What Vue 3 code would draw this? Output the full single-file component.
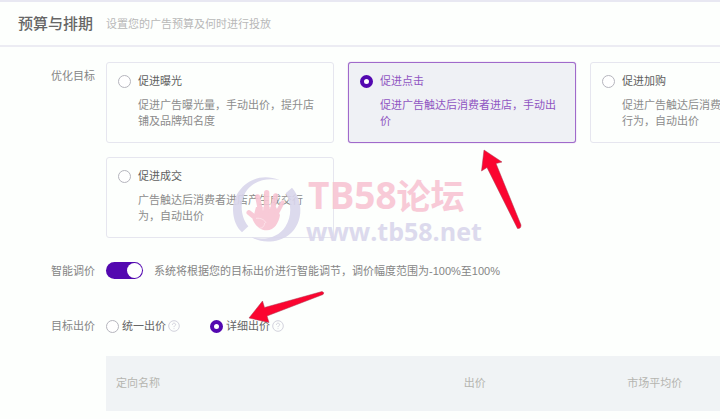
<script setup>
import { ref } from 'vue'

const goal = ref('click')
const bid = ref('detail')
const smart = ref(true)

const goals = [
  { id: 'exposure', title: '促进曝光', text: '促进广告曝光量，手动出价，提升店铺及品牌知名度' },
  { id: 'click', title: '促进点击', text: '促进广告触达后消费者进店，手动出价' },
  { id: 'cart', title: '促进加购', text: '促进广告触达后消费者进店产生加购行为，自动出价' },
  { id: 'deal', title: '促进成交', text: '广告触达后消费者进店产生成交行为，自动出价' }
]
const bids = [
  { id: 'unified', label: '统一出价' },
  { id: 'detail', label: '详细出价' }
]
</script>

<template>
  <main class="page">
    <header class="head">
      <h1>预算与排期</h1>
      <p>设置您的广告预算及何时进行投放</p>
    </header>

    <form class="form">
      <div class="row goals-row">
        <span id="goal-label" class="label">优化目标</span>
        <div class="goals" role="radiogroup" aria-labelledby="goal-label">
          <label v-for="g in goals" :key="g.id" class="card" :class="{ active: goal === g.id }">
            <input v-model="goal" class="radio" type="radio" name="goal" :value="g.id" />
            <span class="card-body">
              <span class="card-title">{{ g.title }}</span>
              <span class="card-text">{{ g.text }}</span>
            </span>
          </label>
        </div>
      </div>

      <div class="row smart-row">
        <label class="label" for="smart">智能调价</label>
        <input id="smart" v-model="smart" class="switch" type="checkbox" role="switch" />
        <span class="hint">系统将根据您的目标出价进行智能调节，调价幅度范围为-100%至100%</span>
      </div>

      <div class="row bid-row">
        <span id="bid-label" class="label">目标出价</span>
        <div class="bids" role="radiogroup" aria-labelledby="bid-label">
          <label v-for="b in bids" :key="b.id" class="bid">
            <input v-model="bid" class="radio" type="radio" name="bid" :value="b.id" />
            <span class="bid-text">{{ b.label }}</span>
            <svg class="help" viewBox="0 0 12 12" aria-hidden="true">
              <circle cx="6" cy="6" r="5.3" />
              <path d="M4.4 4.8C4.4 2.6 7.7 2.7 7.6 4.7C7.5 5.8 6 5.8 6 7.1M6 8.3V9.1" />
            </svg>
          </label>
        </div>
      </div>

      <div class="table-wrap">
        <table>
          <thead>
            <tr>
              <th class="col-name" scope="col">定向名称</th>
              <th class="col-bid" scope="col">出价</th>
              <th scope="col">市场平均价</th>
            </tr>
          </thead>
        </table>
      </div>
    </form>

    <div class="mark">
      <svg class="emblem" viewBox="36 33 210 204" aria-hidden="true">
        <g fill="#d9d6ec">
          <path d="M178 45C105 15 39 70 39 135C40 165 50 187 66 202L85 184C56 149 58 90 94 62C118 44 146 40 178 45Z" />
          <path d="M197 85L216 68C254 112 247 178 207 209C174 234 126 236 95 217C137 228 177 215 196 185C215 154 216 117 197 85Z" />
        </g>
        <g fill="#f8c5d3" stroke="#f8c5d3" stroke-linecap="round">
          <path d="M108 126L168 126L180 150C176 174 163 196 140 196C120 196 106 182 98 164Z" stroke="none" />
          <path d="M87 143L118 168" stroke-width="15" />
          <path d="M113 95L122 140" stroke-width="15" />
          <path d="M140 83L140 135" stroke-width="16" />
          <path d="M167 92L157 137" stroke-width="15" />
          <path d="M188 112L168 150" stroke-width="12" />
        </g>
        <path d="M108 160C123 158 134 165 138 174M129 136L130 119M149 131L153 115M134 174C133 185 126 190 119 189" fill="none" stroke="#fdeaf0" stroke-width="2" />
      </svg>
      <div class="mark-text">
        <span class="mark-name">TB58<span class="mark-cjk">论坛</span></span>
        <span class="mark-url">www.tb58.net</span>
      </div>
    </div>

    <svg class="arrow arrow-up" viewBox="480 149 43 81" aria-hidden="true">
      <path d="M484 150L502 162L496 163.5L521 225Q521 229 517.5 228.5L487 167.5L481.5 171Z" />
    </svg>
    <svg class="arrow arrow-side" viewBox="248 290 77 34" aria-hidden="true">
      <path d="M249 318L262.5 301L264.5 307.5L322 291.5Q325 292.5 323 294.5L267 316L269 322.5Z" />
    </svg>
  </main>
</template>

<style>
body {
  margin: 0;
  background: #fdfffd;
}
</style>

<style scoped>
.page {
  position: relative;
  overflow: hidden;
  padding-bottom: 8px;
  border-top: 2px solid #e8e8f2;
  box-sizing: border-box;
  color: #858585;
  font: 11px/16px "Liberation Sans", "Noto Sans CJK SC", sans-serif;
}
.head {
  display: flex;
  align-items: center;
  gap: 13px;
  height: 43px;
  padding-left: 18px;
  border-bottom: 2px solid #ececf3;
}
h1 {
  margin: 0;
  color: #666;
  font-size: 15px;
  font-weight: 500;
}
.head p {
  margin: 0;
  color: #b8b8b8;
}
.form {
  padding-top: 15px;
}
.row {
  display: flex;
  align-items: center;
}
.label {
  flex: none;
  width: 95px;
  margin-right: 11px;
  text-align: right;
}
.goals-row {
  align-items: flex-start;
}
.goals-row .label {
  padding-top: 6px;
}
.goals {
  display: grid;
  grid-template-columns: repeat(3, 228px);
  gap: 14px;
}
.card {
  display: flex;
  align-items: flex-start;
  gap: 7px;
  box-sizing: border-box;
  min-height: 81px;
  padding: 10px 18px 10px 11px;
  border: 1px solid #e6e6ef;
  border-radius: 3px;
}
.card .radio {
  margin-top: 2px;
}
.card-body {
  display: flex;
  flex-direction: column;
  gap: 8px;
}
.card-title {
  color: #606060;
}
.card-text {
  color: #8c8c8c;
}
.card.active {
  border-color: #a06acb;
  background: #eff1f5;
  box-shadow: 0 0 1px #a06acb;
}
.card.active .card-title,
.card.active .card-text {
  color: #8f55c2;
}
.radio {
  appearance: none;
  flex: none;
  box-sizing: border-box;
  width: 13px;
  height: 13px;
  margin: 0;
  border: 1px solid #b5b5bd;
  border-radius: 50%;
  background: #fff;
}
.radio:checked {
  border: 4px solid #5308b0;
}
.smart-row {
  margin-top: 24px;
}
.switch {
  appearance: none;
  display: flex;
  justify-content: flex-start;
  flex: none;
  box-sizing: border-box;
  width: 37px;
  height: 17px;
  margin: 0 11px 0 0;
  padding: 1px;
  border-radius: 9px;
  background: #bbb;
}
.switch::before {
  content: "";
  width: 15px;
  height: 15px;
  border-radius: 50%;
  background: #fff;
}
.switch:checked {
  justify-content: flex-end;
  background: #5308b0;
}
.hint {
  white-space: nowrap;
}
.bid-row {
  margin-top: 39px;
}
.bids {
  display: flex;
  gap: 30px;
}
.bid {
  display: flex;
  align-items: center;
}
.bid-text {
  margin: 0 2px 0 3px;
  color: #666;
}
.help {
  width: 12px;
  height: 12px;
  fill: none;
  stroke: #d2d2dc;
  stroke-width: 1;
}
.table-wrap {
  margin: 22px 0 0 106px;
}
table {
  width: 100%;
  border-collapse: collapse;
  table-layout: fixed;
  background: #f0f3f5;
}
th {
  height: 53px;
  padding: 0 0 2px 10px;
  color: #b5b5b0;
  font-weight: 400;
  text-align: left;
}
.col-name {
  width: 55%;
}
.col-bid {
  width: 25%;
}
.mark {
  position: absolute;
  top: 174px;
  left: 232px;
  display: flex;
  gap: 4px;
  opacity: 0.9;
  font-family: "Open Sans", "Noto Sans CJK SC", sans-serif;
  font-weight: 700;
  pointer-events: none;
}
.emblem {
  width: 70px;
  height: 68px;
}
.mark-text {
  display: flex;
  flex-direction: column;
  white-space: nowrap;
}
.mark-name {
  padding-left: 2px;
  color: #f8c5d3;
  font-size: 37px;
  line-height: 37px;
}
.mark-cjk {
  font-size: 34px;
}
.mark-url {
  color: #d9d6ec;
  font-size: 25px;
  line-height: 32px;
}
.arrow {
  position: absolute;
  fill: #fb0530;
  stroke: #a83a50;
  stroke-width: 0.5;
  pointer-events: none;
}
.arrow-up {
  top: 147px;
  left: 480px;
  width: 43px;
  height: 81px;
}
.arrow-side {
  top: 288px;
  left: 248px;
  width: 77px;
  height: 34px;
}
</style>
